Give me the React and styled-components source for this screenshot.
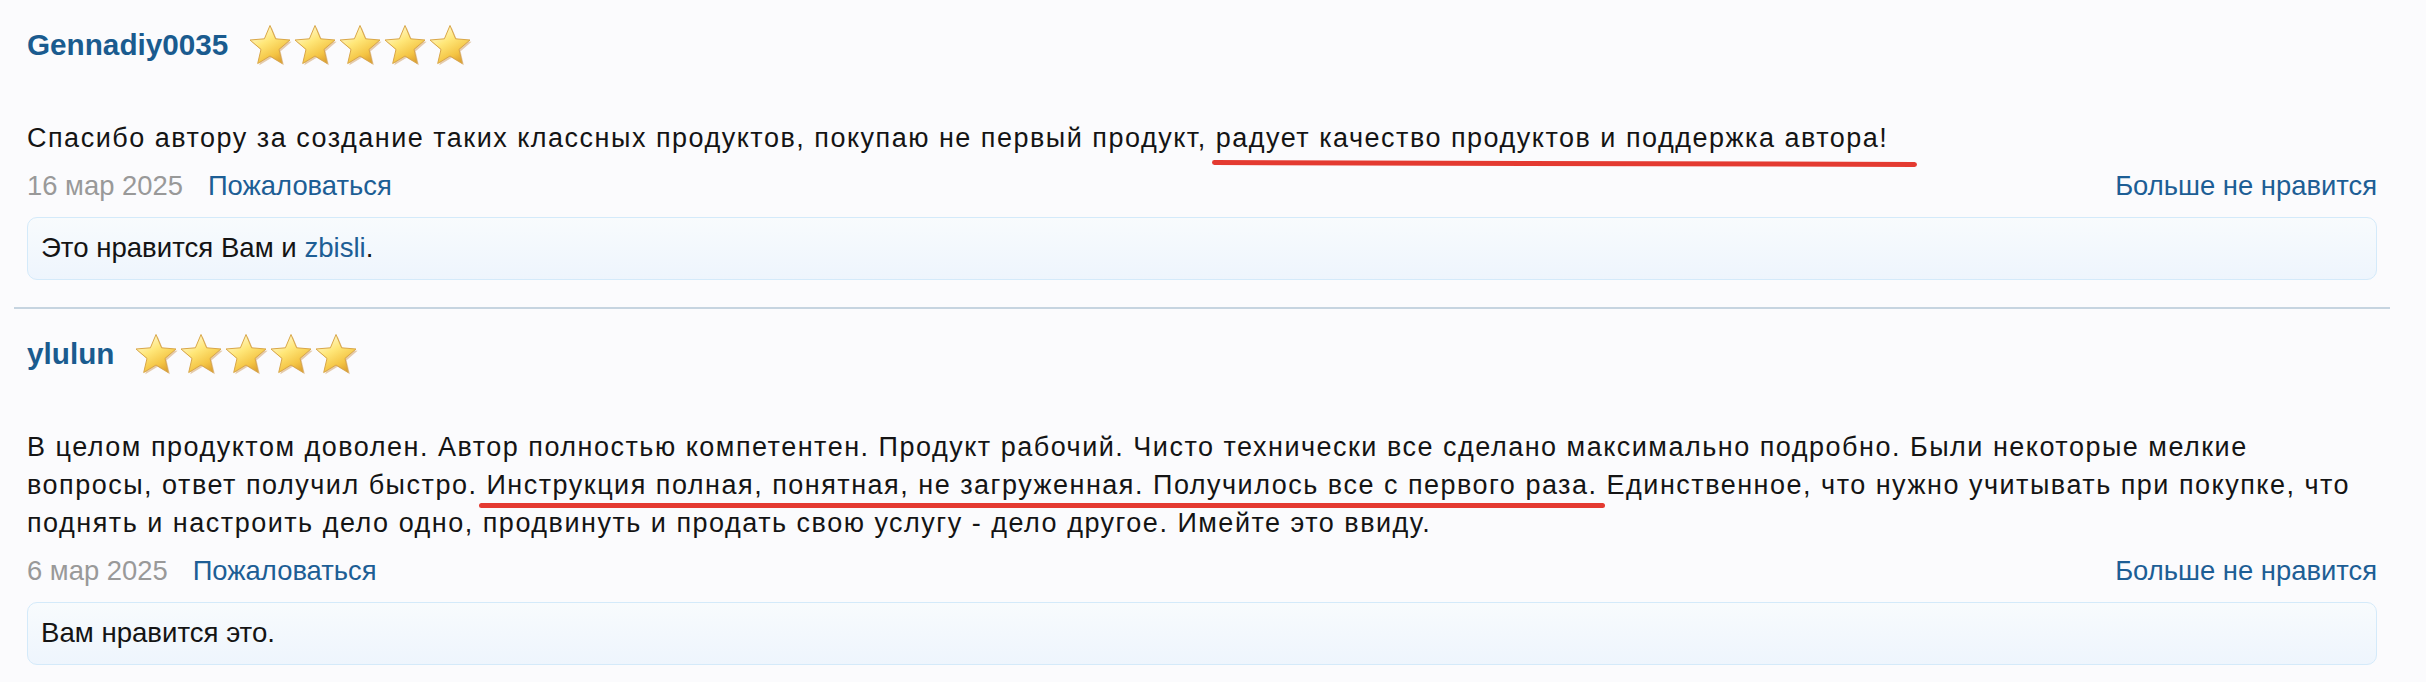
import React from "react"
import styled, { createGlobalStyle } from "styled-components"

const GlobalStyle = createGlobalStyle`
  html, body {
    margin: 0;
    padding: 0;
    background: #fbfbfd;
  }
  body {
    font-family: "Liberation Sans", Arial, sans-serif;
    color: #141414;
  }
`

const ReviewList = styled.div`
  width: 2376px;
  margin-left: 14px;
`

const Review = styled.div`
  padding: 20px 13px 27px;
  & + & {
    border-top: 2px solid #c6d4e0;
  }
`

const ReviewHeader = styled.div`
  display: flex;
  align-items: center;
  height: 50px;
`

const UserName = styled.a`
  font-size: 29.7px;
  font-weight: 700;
  color: #1a5b8f;
  text-decoration: none;
  margin-right: 20px;
`

const Stars = styled.div`
  display: flex;
  gap: 1px;
`

const ReviewText = styled.p`
  margin: 49px 0 0;
  font-size: 27px;
  letter-spacing: 1.5px;
  line-height: 38px;
  color: #141414;
`

const Marked = styled.span`
  position: relative;
  &::after {
    content: "";
    position: absolute;
    left: ${(p) => p.$left}px;
    right: ${(p) => p.$right}px;
    bottom: ${(p) => p.$bottom}px;
    height: 5px;
    border-radius: 3px;
    background: #e43a31;
    transform: rotate(${(p) => p.$tilt || 0}deg);
  }
`

const MetaRow = styled.div`
  display: flex;
  align-items: center;
  justify-content: space-between;
  margin-top: 10px;
  font-size: 27.4px;
  line-height: 38px;
`

const MetaLeft = styled.div`
  display: flex;
  gap: 25px;
`

const DateText = styled.span`
  color: #999;
`

const Link = styled.a`
  color: #1d5e95;
  text-decoration: none;
  cursor: pointer;
`

const LikeBox = styled.div`
  margin-top: 12px;
  padding: 11px 13px 12px;
  border: 1px solid #d4eafa;
  border-radius: 10px;
  background: linear-gradient(#f8fbfd, #eef5fd);
  font-size: 27.6px;
  line-height: 38px;
  color: #141414;
`

const STAR_POINTS =
  "22,2.5 27.6,15.8 42,17 31,26.4 34.3,40.5 22,33 9.7,40.5 13,26.4 2,17 16.4,15.8"

function Star() {
  return (
    <svg width="44" height="44" viewBox="0 0 44 44">
      <defs>
        <linearGradient id="starFill" x1="0.2" y1="0" x2="0.8" y2="1">
          <stop offset="0" stopColor="#fffbe2" />
          <stop offset="0.4" stopColor="#ffe779" />
          <stop offset="0.75" stopColor="#f4c443" />
          <stop offset="1" stopColor="#d8982a" />
        </linearGradient>
      </defs>
      <polygon
        transform="translate(1.6 1.8)"
        fill="#c9914a"
        opacity="0.45"
        points={STAR_POINTS}
      />
      <polygon
        fill="url(#starFill)"
        stroke="#d9a648"
        strokeWidth="1"
        strokeLinejoin="round"
        points={STAR_POINTS}
      />
    </svg>
  )
}

function Rating({ value }) {
  return (
    <Stars>
      {Array.from({ length: value }).map((_, i) => (
        <Star key={i} />
      ))}
    </Stars>
  )
}

const reviews = [
  {
    user: "Gennadiy0035",
    rating: 5,
    date: "16 мар 2025",
    text: (
      <>
        Спасибо автору за создание таких классных продуктов, покупаю не первый
        продукт,{" "}
        <Marked $left={-4} $right={-28} $bottom={-13} $tilt={0.15}>
          радует качество продуктов и поддержка автора!
        </Marked>
      </>
    ),
    likes: (
      <>
        Это нравится Вам и <Link>zbisli</Link>.
      </>
    ),
  },
  {
    user: "ylulun",
    rating: 5,
    date: "6 мар 2025",
    text: (
      <>
        В целом продуктом доволен. Автор полностью компетентен. Продукт рабочий.
        Чисто технически все сделано максимально подробно. Были некоторые
        мелкие вопросы, ответ получил быстро.{" "}
        <Marked $left={-7} $right={-7} $bottom={-8}>
          Инструкция полная, понятная, не загруженная. Получилось все с первого
          раза.
        </Marked>{" "}
        Единственное, что нужно учитывать при покупке, что поднять и настроить
        дело одно, продвинуть и продать свою услугу - дело другое. Имейте это
        ввиду.
      </>
    ),
    likes: <>Вам нравится это.</>,
  },
]

export default function App() {
  return (
    <>
      <GlobalStyle />
      <ReviewList>
        {reviews.map((r) => (
          <Review key={r.user}>
            <ReviewHeader>
              <UserName>{r.user}</UserName>
              <Rating value={r.rating} />
            </ReviewHeader>
            <ReviewText>{r.text}</ReviewText>
            <MetaRow>
              <MetaLeft>
                <DateText>{r.date}</DateText>
                <Link>Пожаловаться</Link>
              </MetaLeft>
              <Link>Больше не нравится</Link>
            </MetaRow>
            <LikeBox>{r.likes}</LikeBox>
          </Review>
        ))}
      </ReviewList>
    </>
  )
}
